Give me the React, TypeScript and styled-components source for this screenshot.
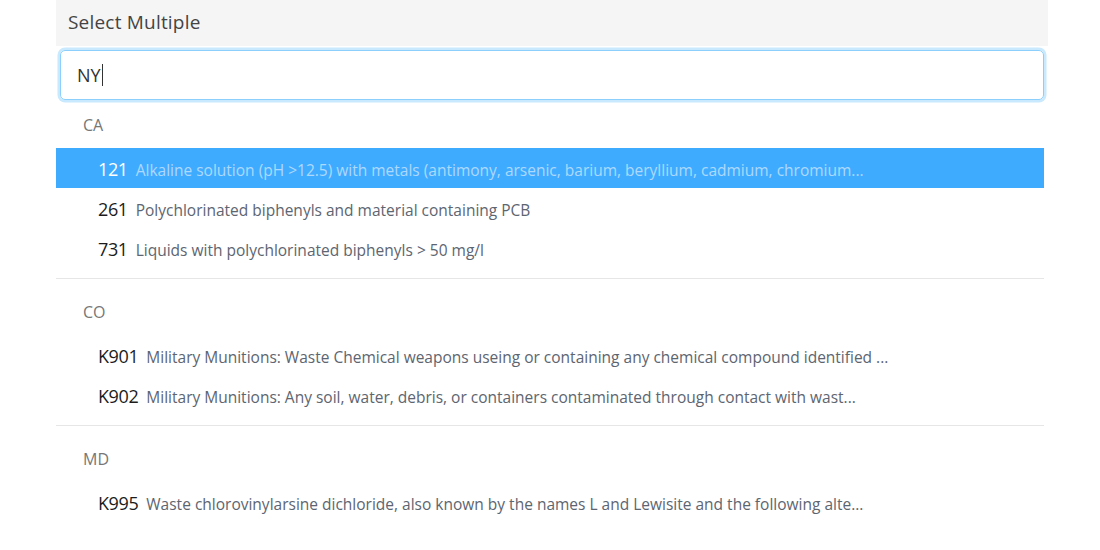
import React from "react";
import styled, { createGlobalStyle } from "styled-components";

const Global = createGlobalStyle`
  html, body { margin: 0; padding: 0; background: #ffffff; }
  body { font-family: "Open Sans", "Noto Sans", sans-serif; -webkit-font-smoothing: antialiased; }
  * { box-sizing: border-box; }
`;

const Page = styled.div`
  padding-left: 56px;
  width: 1048px;
`;

const Header = styled.div`
  height: 46px;
  background: #f5f5f5;
  display: flex;
  align-items: center;
  padding-left: 12px;
  padding-bottom: 2px;
  font-size: 19px;
  letter-spacing: 0.2px;
  color: #444;
`;

const InputWrap = styled.div`
  padding: 4px 4px 0 4px;
`;

const SearchBox = styled.div`
  height: 50px;
  border: 1px solid #8ccffd;
  border-radius: 5px;
  box-shadow: 0 0 0 2.5px #c9e9ff;
  display: flex;
  align-items: center;
  padding-left: 16px;
  font-size: 18px;
  color: #333;
`;

const Caret = styled.span`
  display: inline-block;
  width: 1px;
  height: 22px;
  background: #333;
  margin-left: 1px;
`;

const List = styled.div`
  margin-right: 4px;
`;

const Group = styled.div<{ $last?: boolean }>`
  padding-bottom: 10px;
  border-bottom: ${(p) => (p.$last ? "none" : "1px solid #e6e6e6")};
`;

const GroupLabel = styled.div<{ $first?: boolean }>`
  padding: ${(p) => (p.$first ? "12px" : "20px")} 27px 10px;
  line-height: 26px;
  font-size: 16px;
  color: #777;
`;

const Option = styled.div<{ $active?: boolean }>`
  height: 40px;
  display: flex;
  align-items: center;
  gap: 8px;
  padding-left: 42px;
  padding-top: 2px;
  background: ${(p) => (p.$active ? "#3fabff" : "transparent")};
  white-space: nowrap;
`;

const Code = styled.span<{ $active?: boolean }>`
  font-size: 18px;
  font-weight: 500;
  letter-spacing: -0.4px;
  color: ${(p) => (p.$active ? "#ffffff" : "#1c1c1c")};
`;

const Desc = styled.span<{ $active?: boolean }>`
  font-size: 15.5px;
  color: ${(p) => (p.$active ? "#aed9ff" : "#5d6570")};
  padding-top: 1px;
`;

type Item = { code: string; desc: string; active?: boolean };
type G = { label: string; items: Item[] };

const groups: G[] = [
  {
    label: "CA",
    items: [
      {
        code: "121",
        desc: "Alkaline solution (pH >12.5) with metals (antimony, arsenic, barium, beryllium, cadmium, chromium...",
        active: true,
      },
      { code: "261", desc: "Polychlorinated biphenyls and material containing PCB" },
      { code: "731", desc: "Liquids with polychlorinated biphenyls > 50 mg/l" },
    ],
  },
  {
    label: "CO",
    items: [
      {
        code: "K901",
        desc: "Military Munitions: Waste Chemical weapons useing or containing any chemical compound identified ...",
      },
      {
        code: "K902",
        desc: "Military Munitions: Any soil, water, debris, or containers contaminated through contact with wast...",
      },
    ],
  },
  {
    label: "MD",
    items: [
      {
        code: "K995",
        desc: "Waste chlorovinylarsine dichloride, also known by the names L and Lewisite and the following alte...",
      },
    ],
  },
];

export default function App() {
  return (
    <>
      <Global />
      <Page>
        <Header>Select Multiple</Header>
        <InputWrap>
          <SearchBox>
            NY
            <Caret />
          </SearchBox>
        </InputWrap>
        <List>
          {groups.map((g, gi) => (
            <Group key={g.label} $last={gi === groups.length - 1}>
              <GroupLabel $first={gi === 0}>{g.label}</GroupLabel>
              {g.items.map((it) => (
                <Option key={it.code} $active={it.active}>
                  <Code $active={it.active}>{it.code}</Code>
                  <Desc $active={it.active}>{it.desc}</Desc>
                </Option>
              ))}
            </Group>
          ))}
        </List>
      </Page>
    </>
  );
}
